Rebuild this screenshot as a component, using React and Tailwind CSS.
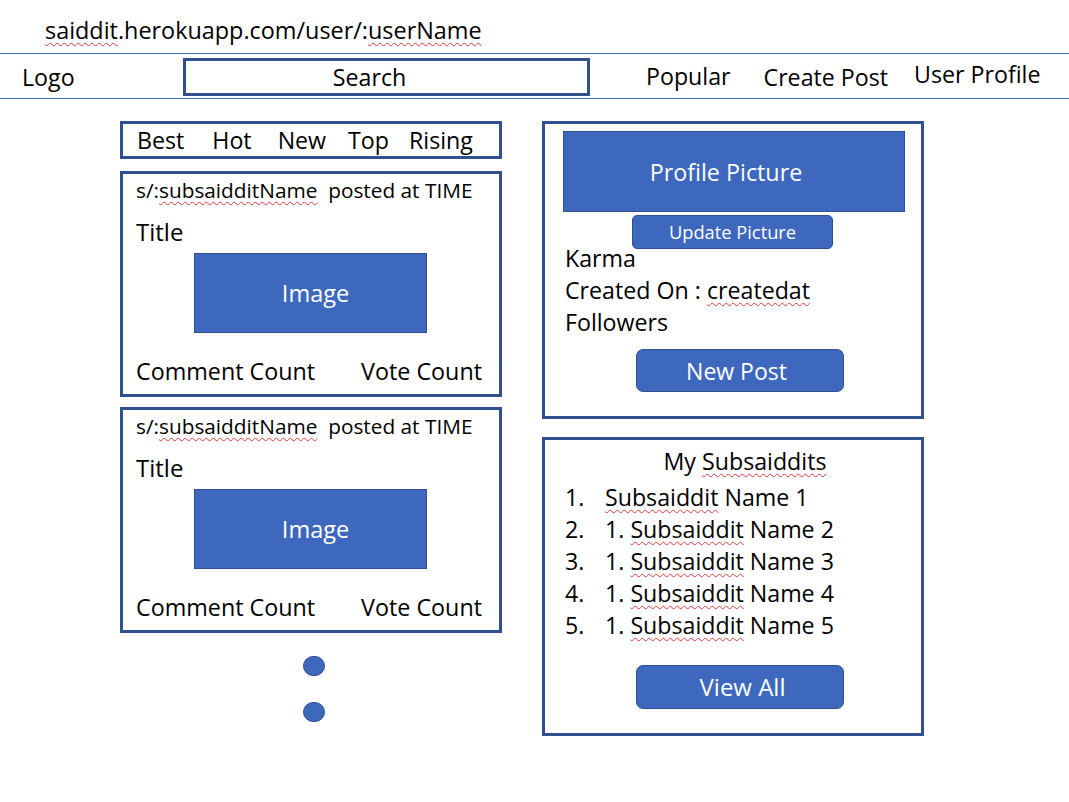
import React from 'react';

const squiggle = 'underline decoration-wavy decoration-[#e23b3b] decoration-1 underline-offset-[3px]';

function PostCard() {
    return (
        <div className="h-[226px] border-[3px] border-[#2f528f] pl-[13px] pr-[17px] pt-[3px] text-[20.8px] leading-[26px]">
            <div>
                s/:<span className={squiggle}>subsaidditName</span>&nbsp; posted at TIME
            </div>
            <div className="mt-[16px] text-[24px]">Title</div>
            <div className="ml-[58px] mt-[8px] w-[233px] h-[80px] bg-[#3e68bd] border border-[#2f528f] flex items-center justify-center pl-[10px] text-white text-[23.5px]">
                Image
            </div>
            <div className="mt-[25px] flex justify-between text-[23.3px]">
                <span>Comment Count</span>
                <span>Vote Count</span>
            </div>
        </div>
    );
}

export default function App() {
    const subs = [
        { n: '1.', text: <><span className={squiggle}>Subsaiddit</span> Name 1</> },
        { n: '2.', text: <>1. <span className={squiggle}>Subsaiddit</span> Name 2</> },
        { n: '3.', text: <>1. <span className={squiggle}>Subsaiddit</span> Name 3</> },
        { n: '4.', text: <>1. <span className={squiggle}>Subsaiddit</span> Name 4</> },
        { n: '5.', text: <>1. <span className={squiggle}>Subsaiddit</span> Name 5</> },
    ];

    return (
        <div className="w-[1069px] h-[802px] bg-white text-black font-['Open_Sans',sans-serif]">
            {/* URL */}
            <div className="h-[53px] pl-[45px] pt-[16px] text-[23.4px] leading-[28px]">
                <span className={squiggle}>saiddit</span>.herokuapp.com/user/:<span className={squiggle}>userName</span>
            </div>

            {/* Header */}
            <div className="h-[46px] border-y border-[#4472c4] flex items-start text-[23.2px] leading-[28px]">
                <div className="w-[183px] pl-[22px] pt-[9px]">Logo</div>
                <div className="mt-[4px] w-[407px] h-[38px] border-[3px] border-[#2f528f] flex items-center justify-center pr-[34px]">
                    Search
                </div>
                <div className="ml-[56px] pt-[8px]">Popular</div>
                <div className="ml-[33px] pt-[9px]">Create Post</div>
                <div className="ml-[26px] pt-[6px]">User Profile</div>
            </div>

            {/* Main */}
            <div className="flex pl-[120px] pt-[22px]">
                {/* Left column */}
                <div className="w-[382px] flex flex-col">
                    <div className="h-[38px] border-[3px] border-[#2f528f] flex items-center pl-[14px] text-[23.2px] leading-[28px]">
                        <span>Best</span>
                        <span className="ml-[28px]">Hot</span>
                        <span className="ml-[26px]">New</span>
                        <span className="ml-[22px]">Top</span>
                        <span className="ml-[20px]">Rising</span>
                    </div>
                    <div className="mt-[12px]">
                        <PostCard />
                    </div>
                    <div className="mt-[10px]">
                        <PostCard />
                    </div>
                    <div className="flex flex-col items-center gap-[26px] mt-[23px] pl-[5px]">
                        <div className="w-[22px] h-[20px] rounded-full bg-[#3e68bd] border border-[#2f528f]" />
                        <div className="w-[22px] h-[20px] rounded-full bg-[#3e68bd] border border-[#2f528f]" />
                    </div>
                </div>

                {/* Right column */}
                <div className="ml-[40px] w-[382px] flex flex-col">
                    <div className="h-[298px] border-[3px] border-[#2f528f] pt-[7px] pl-[18px] text-[23.2px] leading-[32px]">
                        <div className="w-[342px] h-[81px] bg-[#3e68bd] border border-[#2f528f] flex items-center justify-center pr-[16px] text-white text-[23.3px]">
                            Profile Picture
                        </div>
                        <div className="ml-[69px] mt-[3px] w-[201px] h-[34px] rounded-[5px] bg-[#3e68bd] border border-[#2f528f] flex items-center justify-center text-white text-[18.3px] leading-[20px]">
                            Update Picture
                        </div>
                        <div className="pl-[2px] mt-[-7px]">
                            <div>Karma</div>
                            <div>Created On : <span className={squiggle}>createdat</span></div>
                            <div>Followers</div>
                        </div>
                        <div className="ml-[73px] mt-[11px] w-[208px] h-[43px] rounded-[7px] bg-[#3e68bd] border border-[#2f528f] flex items-center justify-center pr-[7px] text-white text-[23px]">
                            New Post
                        </div>
                    </div>

                    <div className="mt-[18px] h-[299px] border-[3px] border-[#2f528f] pt-[5px] text-[23.2px] leading-[32px]">
                        <div className="text-center pl-[24px]">
                            My <span className={squiggle}>Subsaiddits</span>
                        </div>
                        <div className="pl-[20px] mt-[4px]">
                            {subs.map((s) => (
                                <div key={s.n} className="flex">
                                    <span className="w-[40px]">{s.n}</span>
                                    <span>{s.text}</span>
                                </div>
                            ))}
                        </div>
                        <div className="ml-[91px] mt-[24px] w-[208px] h-[44px] rounded-[7px] bg-[#3e68bd] border border-[#2f528f] flex items-center justify-center pl-[5px] text-white text-[24px]">
                            View All
                        </div>
                    </div>
                </div>
            </div>
        </div>
    );
}
